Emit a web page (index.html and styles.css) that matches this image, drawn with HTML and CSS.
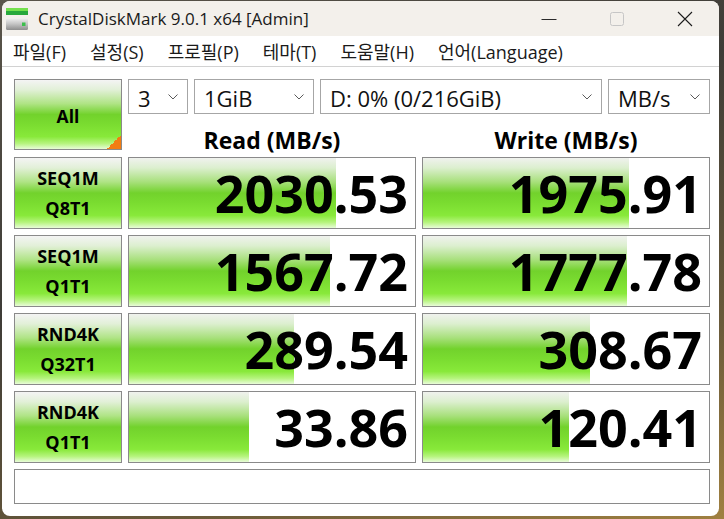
FILE: index.html
```html
<!DOCTYPE html>
<html lang="ko">
<head>
<meta charset="utf-8">
<title>CrystalDiskMark</title>
<link rel="stylesheet" href="styles.css">
</head>
<body>
<div class="window">
  <div class="titlebar">
    <svg class="app-icon" width="24" height="24" viewBox="0 0 24 24">
      <defs>
        <linearGradient id="disk" x1="0" y1="0" x2="0" y2="1">
          <stop offset="0" stop-color="#f2f2f2"/>
          <stop offset="0.5" stop-color="#c4c4c4"/>
          <stop offset="1" stop-color="#8e8e8e"/>
        </linearGradient>
      </defs>
      <rect x="1" y="1" width="22" height="3" fill="#74e04c"/>
      <rect x="1" y="4" width="22" height="4" fill="#27a83c"/>
      <rect x="1" y="11" width="22" height="12" rx="1.5" fill="url(#disk)"/>
      <rect x="17" y="15.5" width="3.5" height="3.5" fill="#3cbf4c"/>
    </svg>
    <span class="title">CrystalDiskMark 9.0.1 x64 [Admin]</span>
    <div class="controls">
      <span class="ctl"><svg width="16" height="16" viewBox="0 0 16 16"><line x1="0.5" y1="8.5" x2="15.5" y2="8.5" stroke="#2a2a2a" stroke-width="1"/></svg></span>
      <span class="ctl"><svg width="16" height="16" viewBox="0 0 16 16"><rect x="1.5" y="1.5" width="13" height="13" rx="2" fill="none" stroke="#c6c6c6" stroke-width="1"/></svg></span>
      <span class="ctl"><svg width="16" height="16" viewBox="0 0 16 16"><path d="M1 1 L15 15 M15 1 L1 15" stroke="#1c1c1c" stroke-width="1.1" fill="none"/></svg></span>
    </div>
  </div>
  <div class="menubar">
    <span class="menu-item">파일(F)</span>
    <span class="menu-item">설정(S)</span>
    <span class="menu-item">프로필(P)</span>
    <span class="menu-item">테마(T)</span>
    <span class="menu-item">도움말(H)</span>
    <span class="menu-item">언어(Language)</span>
  </div>
  <div class="content">
    <div class="grid">
      <div class="btn all">All</div>
      <div class="top-right">
        <div class="selects">
          <div class="select s-count"><span>3</span><svg width="10" height="6" viewBox="0 0 10 6"><polyline points="0.5,0.5 5,5 9.5,0.5" fill="none" stroke="#5a5a5a" stroke-width="1"/></svg></div>
          <div class="select s-size"><span>1GiB</span><svg width="10" height="6" viewBox="0 0 10 6"><polyline points="0.5,0.5 5,5 9.5,0.5" fill="none" stroke="#5a5a5a" stroke-width="1"/></svg></div>
          <div class="select s-drive"><span>D: 0% (0/216GiB)</span><svg width="10" height="6" viewBox="0 0 10 6"><polyline points="0.5,0.5 5,5 9.5,0.5" fill="none" stroke="#5a5a5a" stroke-width="1"/></svg></div>
          <div class="select s-unit"><span>MB/s</span><svg width="10" height="6" viewBox="0 0 10 6"><polyline points="0.5,0.5 5,5 9.5,0.5" fill="none" stroke="#5a5a5a" stroke-width="1"/></svg></div>
        </div>
        <div class="headers">
          <div class="header">Read (MB/s)</div>
          <div class="header">Write (MB/s)</div>
        </div>
      </div>

      <div class="btn test">SEQ1M<br>Q8T1</div>
      <div class="result" style="background-size:207px 100%">2030.53</div>
      <div class="result" style="background-size:206px 100%">1975.91</div>

      <div class="btn test">SEQ1M<br>Q1T1</div>
      <div class="result" style="background-size:201px 100%">1567.72</div>
      <div class="result" style="background-size:204px 100%">1777.78</div>

      <div class="btn test">RND4K<br>Q32T1</div>
      <div class="result" style="background-size:165px 100%">289.54</div>
      <div class="result" style="background-size:167px 100%">308.67</div>

      <div class="btn test">RND4K<br>Q1T1</div>
      <div class="result" style="background-size:120px 100%">33.86</div>
      <div class="result" style="background-size:146px 100%">120.41</div>

      <div class="status"></div>
    </div>
  </div>
</div>
</body>
</html>
```
FILE: styles.css
```css
html, body {
  margin: 0;
  padding: 0;
}
body {
  width: 724px;
  height: 519px;
  overflow: hidden;
  background: linear-gradient(160deg, #5a554a 0%, #3e3c37 40%, #6a5a3a 75%, #a08040 100%);
  font-family: "Open Sans", "Noto Sans CJK KR", sans-serif;
  color: #000;
}
.window {
  box-sizing: border-box;
  width: 717px;
  height: 515px;
  margin: 1px 0 0 2px;
  border-radius: 8px;
  overflow: hidden;
  background: #ffffff;
  display: flex;
  flex-direction: column;
}
.titlebar {
  height: 35px;
  flex: none;
  background: #f3f0eb;
  display: flex;
  align-items: center;
}
.app-icon {
  margin-left: 3px;
  flex: none;
}
.title {
  margin-left: 9px;
  font-size: 17px;
  color: #1a1a1a;
  white-space: nowrap;
}
.controls {
  margin-left: auto;
  display: flex;
  height: 35px;
}
.ctl {
  width: 68px;
  height: 35px;
  display: flex;
  align-items: center;
  justify-content: center;
}
.menubar {
  height: 30px;
  flex: none;
  border-bottom: 1px solid #d2d2d2;
  background: #ffffff;
  display: flex;
  align-items: center;
  padding-left: 11px;
  gap: 24px;
  font-size: 18px;
  color: #1a1a1a;
  white-space: nowrap;
}
.content {
  padding: 12px 9px 12px 12px;
}
.grid {
  display: grid;
  grid-template-columns: 108px 288px 288px;
  grid-template-rows: 72px repeat(4, 72px) 35px;
  gap: 6px;
}
.btn {
  box-sizing: border-box;
  border: 1px solid #8a8a8a;
  background: linear-gradient(to bottom,
    #f4f4f4 0%, #e2f0d8 14%, #b0e486 34%, #72d22c 50%,
    #7adc30 64%, #88e93a 82%, #b6f47e 92%, #e8fcd8 100%);
  display: flex;
  flex-direction: column;
  align-items: center;
  justify-content: center;
  text-align: center;
  font-weight: 700;
  font-size: 18px;
  line-height: 30px;
}
.all {
  height: 71px;
  padding-top: 2px;
  font-size: 17.5px;
  background:
    linear-gradient(to top left, #f27d12 50%, transparent 50%) right bottom / 14px 14px no-repeat,
    linear-gradient(to bottom,
    #f4f4f4 0%, #e2f0d8 14%, #b0e486 34%, #72d22c 50%,
    #7adc30 64%, #88e93a 82%, #b6f47e 92%, #e8fcd8 100%);
}
.top-right {
  grid-column: 2 / 4;
  display: flex;
  flex-direction: column;
}
.selects {
  display: flex;
  gap: 6px;
  height: 35px;
}
.select {
  box-sizing: border-box;
  height: 35px;
  border: 1px solid #a6a6a6;
  background: #fff;
  display: flex;
  align-items: center;
  justify-content: space-between;
  padding: 3px 9px 0 9px;
  font-size: 22px;
  color: #111;
  white-space: nowrap;
}
.select svg {
  margin-top: -3px;
}
.s-count { width: 60px; }
.s-size { width: 120px; }
.s-drive { width: 282px; }
.s-unit { width: 102px; }
.headers {
  display: grid;
  grid-template-columns: 288px 288px;
  gap: 6px;
  margin-top: 14px;
}
.header {
  text-align: center;
  font-weight: 700;
  font-size: 23px;
  line-height: 24px;
}
.result {
  box-sizing: border-box;
  border: 1px solid #8a8a8a;
  background:
    linear-gradient(to bottom,
    #f0f2ee 0%, #dcefcf 14%, #a8e07c 34%, #72d22c 50%,
    #7adc30 64%, #88e93a 82%, #b6f47e 92%, #e8fcd8 100%) left top / 0 100% no-repeat,
    #ffffff;
  text-align: right;
  padding-right: 7px;
  font-weight: 700;
  font-size: 52px;
  line-height: 70px;
  white-space: nowrap;
}
.status {
  grid-column: 1 / 4;
  box-sizing: border-box;
  border: 1px solid #8a8a8a;
  background: #fff;
}
```
